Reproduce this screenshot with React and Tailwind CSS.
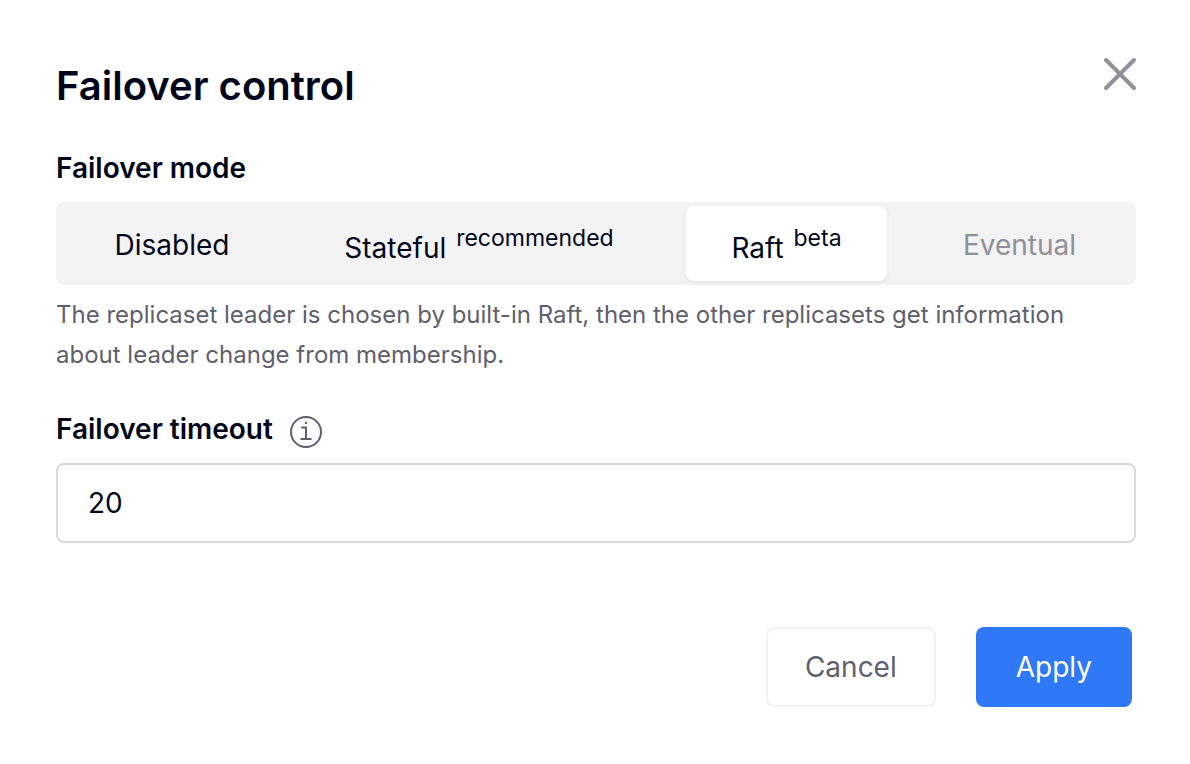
const tab = "flex items-center justify-center rounded-lg pt-0.5";
const tag = "static ml-0.5 align-[12px] text-[23px] leading-8";

export default function App() {
  return (
    <main className="bg-white py-14 pr-[54px] pl-14 font-['Inter',sans-serif] text-[#02061b]">
      <header className="flex items-start justify-between">
        <h1 className="pt-1 text-[40px] leading-[52px] font-semibold">Failover control</h1>
        <button type="button" aria-label="Close" className="-mr-px">
          <svg width="34" height="36" viewBox="0 0 34 36" fill="none" stroke="#8f9099" strokeWidth="4" strokeLinecap="round">
            <path d="M3 4 31 32M31 4 3 32" />
          </svg>
        </button>
      </header>

      <section className="mt-8">
        <h2 id="mode" className="text-[28px] leading-[48px] font-semibold">Failover mode</h2>
        <div role="group" aria-labelledby="mode" className="mt-2.5 grid h-[83px] grid-cols-[232fr_382fr_233fr_233fr] rounded-lg bg-[#f3f3f3] py-1 text-[28px] leading-10 whitespace-nowrap">
          <button type="button" className={tab}>Disabled</button>
          <button type="button" className={tab}>
            <span>Stateful <sup className={tag}>recommended</sup></span>
          </button>
          <button type="button" aria-pressed="true" className={`${tab} mx-4 bg-white shadow-[0_2px_4px_rgba(0,20,20,0.06)]`}>
            <span>Raft <sup className={tag}>beta</sup></span>
          </button>
          <button type="button" disabled className={`${tab} text-[#8f9099]`}>Eventual</button>
        </div>
        <p className="mt-2.5 pr-8 text-[24px] leading-10 text-[#5f606c]">
          The replicaset leader is chosen by built-in Raft, then the other replicasets get information about leader change from membership.
        </p>
      </section>

      <section className="mt-8">
        <div className="flex items-center gap-4">
          <label htmlFor="timeout" className="text-[28px] leading-[44px] font-semibold">Failover timeout</label>
          <svg className="mt-1.5" width="34" height="34" viewBox="0 0 34 34" fill="none" stroke="#5f606c" strokeWidth="2">
            <circle cx="17" cy="17" r="15" />
            <path d="M13 12.5h4v11M12.2 24h9.6" strokeLinecap="round" strokeLinejoin="round" />
            <circle cx="17" cy="8" r="1.2" fill="#5f606c" stroke="none" />
          </svg>
        </div>
        <input id="timeout" type="text" defaultValue="20" className="mt-3 h-20 w-full rounded-lg border-2 border-[#d9d9de] px-[30px] text-[28px]" />
      </section>

      <footer className="mt-[84px] flex justify-end gap-10 pr-1 text-[28px]">
        <button type="button" className="h-20 rounded-lg border-2 border-[#f3f3f3] px-[37px] text-[#5f606c]">Cancel</button>
        <button type="button" className="h-20 rounded-lg bg-[#2f78f7] px-10 text-white">Apply</button>
      </footer>
    </main>
  );
}
